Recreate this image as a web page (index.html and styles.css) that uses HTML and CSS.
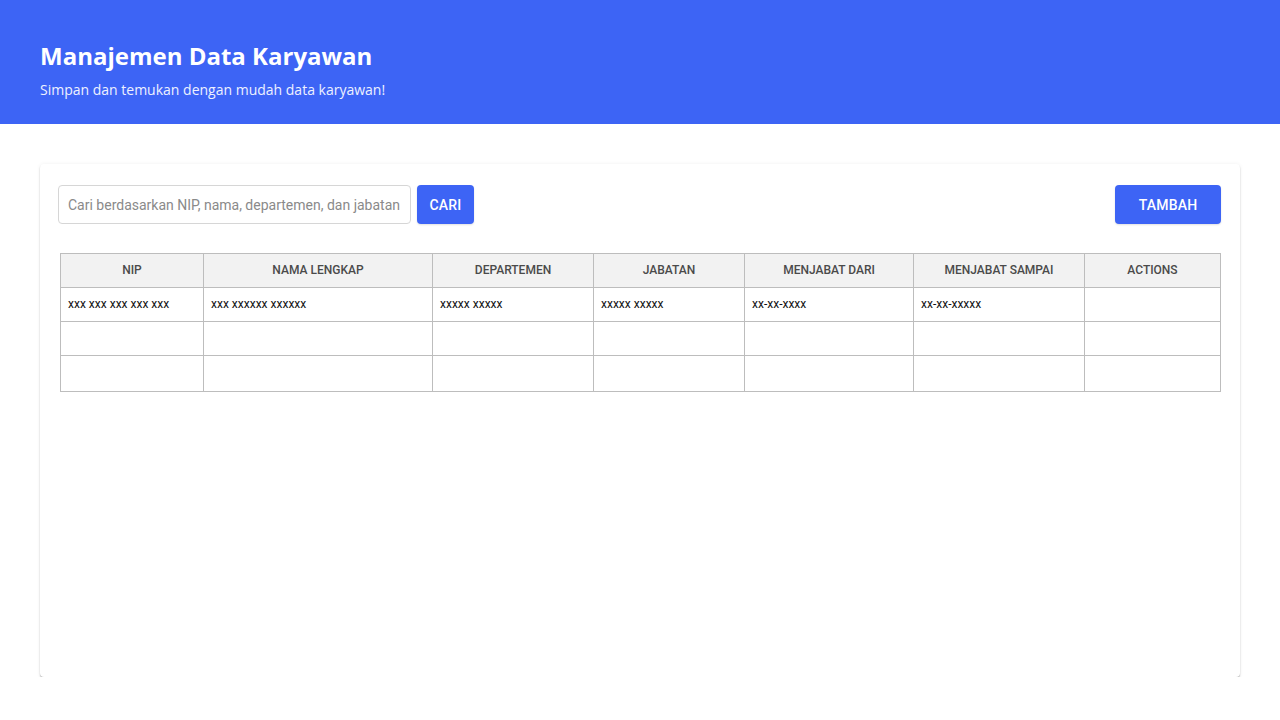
FILE: index.html
```html
<!DOCTYPE html>
<html lang="id">
<head>
<meta charset="utf-8">
<title>Manajemen Data Karyawan</title>
<link rel="stylesheet" href="styles.css">
</head>
<body>
<header class="hero">
  <h1 class="hero-title">Manajemen Data Karyawan</h1>
  <p class="hero-sub">Simpan dan temukan dengan mudah data karyawan!</p>
</header>
<main class="page">
  <section class="card">
    <div class="toolbar">
      <div class="search">
        <input class="search-input" type="text" placeholder="Cari berdasarkan NIP, nama, departemen, dan jabatan">
        <button class="btn btn-small">CARI</button>
      </div>
      <button class="btn btn-wide">TAMBAH</button>
    </div>
    <table class="data-table">
      <colgroup>
        <col class="c1"><col class="c2"><col class="c3"><col class="c4"><col class="c5"><col class="c6"><col class="c7">
      </colgroup>
      <thead>
        <tr>
          <th>NIP</th><th>NAMA LENGKAP</th><th>DEPARTEMEN</th><th>JABATAN</th><th>MENJABAT DARI</th><th>MENJABAT SAMPAI</th><th>ACTIONS</th>
        </tr>
      </thead>
      <tbody>
        <tr>
          <td>xxx xxx xxx xxx xxx</td><td>xxx xxxxxx xxxxxx</td><td>xxxxx xxxxx</td><td>xxxxx xxxxx</td><td>xx-xx-xxxx</td><td>xx-xx-xxxxx</td><td></td>
        </tr>
        <tr><td></td><td></td><td></td><td></td><td></td><td></td><td></td></tr>
        <tr class="last"><td></td><td></td><td></td><td></td><td></td><td></td><td></td></tr>
      </tbody>
    </table>
  </section>
</main>
</body>
</html>
```
FILE: styles.css
```css
* { box-sizing: border-box; }
html, body { margin: 0; padding: 0; background: #fff; }
body { font-family: "Open Sans", "Liberation Sans", sans-serif; }

.hero {
  background: #3d64f5;
  color: #fff;
  height: 124px;
  padding: 40px 40px 0 40px;
}
.hero-title {
  margin: 0;
  font-size: 24px;
  font-weight: 700;
  line-height: 32px;
}
.hero-sub {
  margin: 8px 0 0 0;
  font-size: 14px;
  line-height: 20px;
  color: #eef1ff;
}

.page { padding: 40px 40px 0 40px; }

.card {
  height: 513px;
  background: #fff;
  border-radius: 4px;
  box-shadow: 0 1px 1px rgba(0,0,0,0.18), 0 2px 2px rgba(0,0,0,0.12), 0 0 4px rgba(0,0,0,0.06);
  padding: 21px 19px 0 18px;
}

.toolbar {
  display: flex;
  justify-content: space-between;
  align-items: center;
}
.search { display: flex; gap: 6px; }
.search-input {
  width: 353px;
  height: 39px;
  border: 1px solid #d6d6d6;
  border-radius: 4px;
  padding: 0 9px;
  font-family: Roboto, sans-serif;
  font-size: 14px;
  color: #333;
  outline: none;
}
.search-input::placeholder { color: #8a8a8a; }

.btn {
  height: 39px;
  border: none;
  border-radius: 4px;
  background: #3d64f5;
  color: #fff;
  font-family: Roboto, sans-serif;
  font-size: 14px;
  font-weight: 500;
  letter-spacing: 0.2px;
  box-shadow: 0 1px 2px rgba(0,0,0,0.12);
}
.btn-small { width: 57px; }
.btn-wide { width: 106px; }

.data-table {
  margin: 29px 0 0 2px;
  width: 1160px;
  border-collapse: collapse;
  table-layout: fixed;
  font-family: Roboto, sans-serif;
}
.c1 { width: 143px; }
.c2 { width: 229px; }
.c3 { width: 161px; }
.c4 { width: 151px; }
.c5 { width: 169px; }
.c6 { width: 171px; }
.c7 { width: 136px; }

.data-table th,
.data-table td {
  border: 1px solid #bdbdbd;
  height: 34px;
  padding: 0 7px 1px 7px;
}
.data-table th {
  background: #f2f2f2;
  color: #4a4a4a;
  font-size: 12px;
  font-weight: 500;
  text-align: center;
}
.data-table td {
  font-size: 12px;
  font-weight: 400;
  color: #111;
  text-align: left;
}
.data-table tr.last td { height: 36px; }
```
